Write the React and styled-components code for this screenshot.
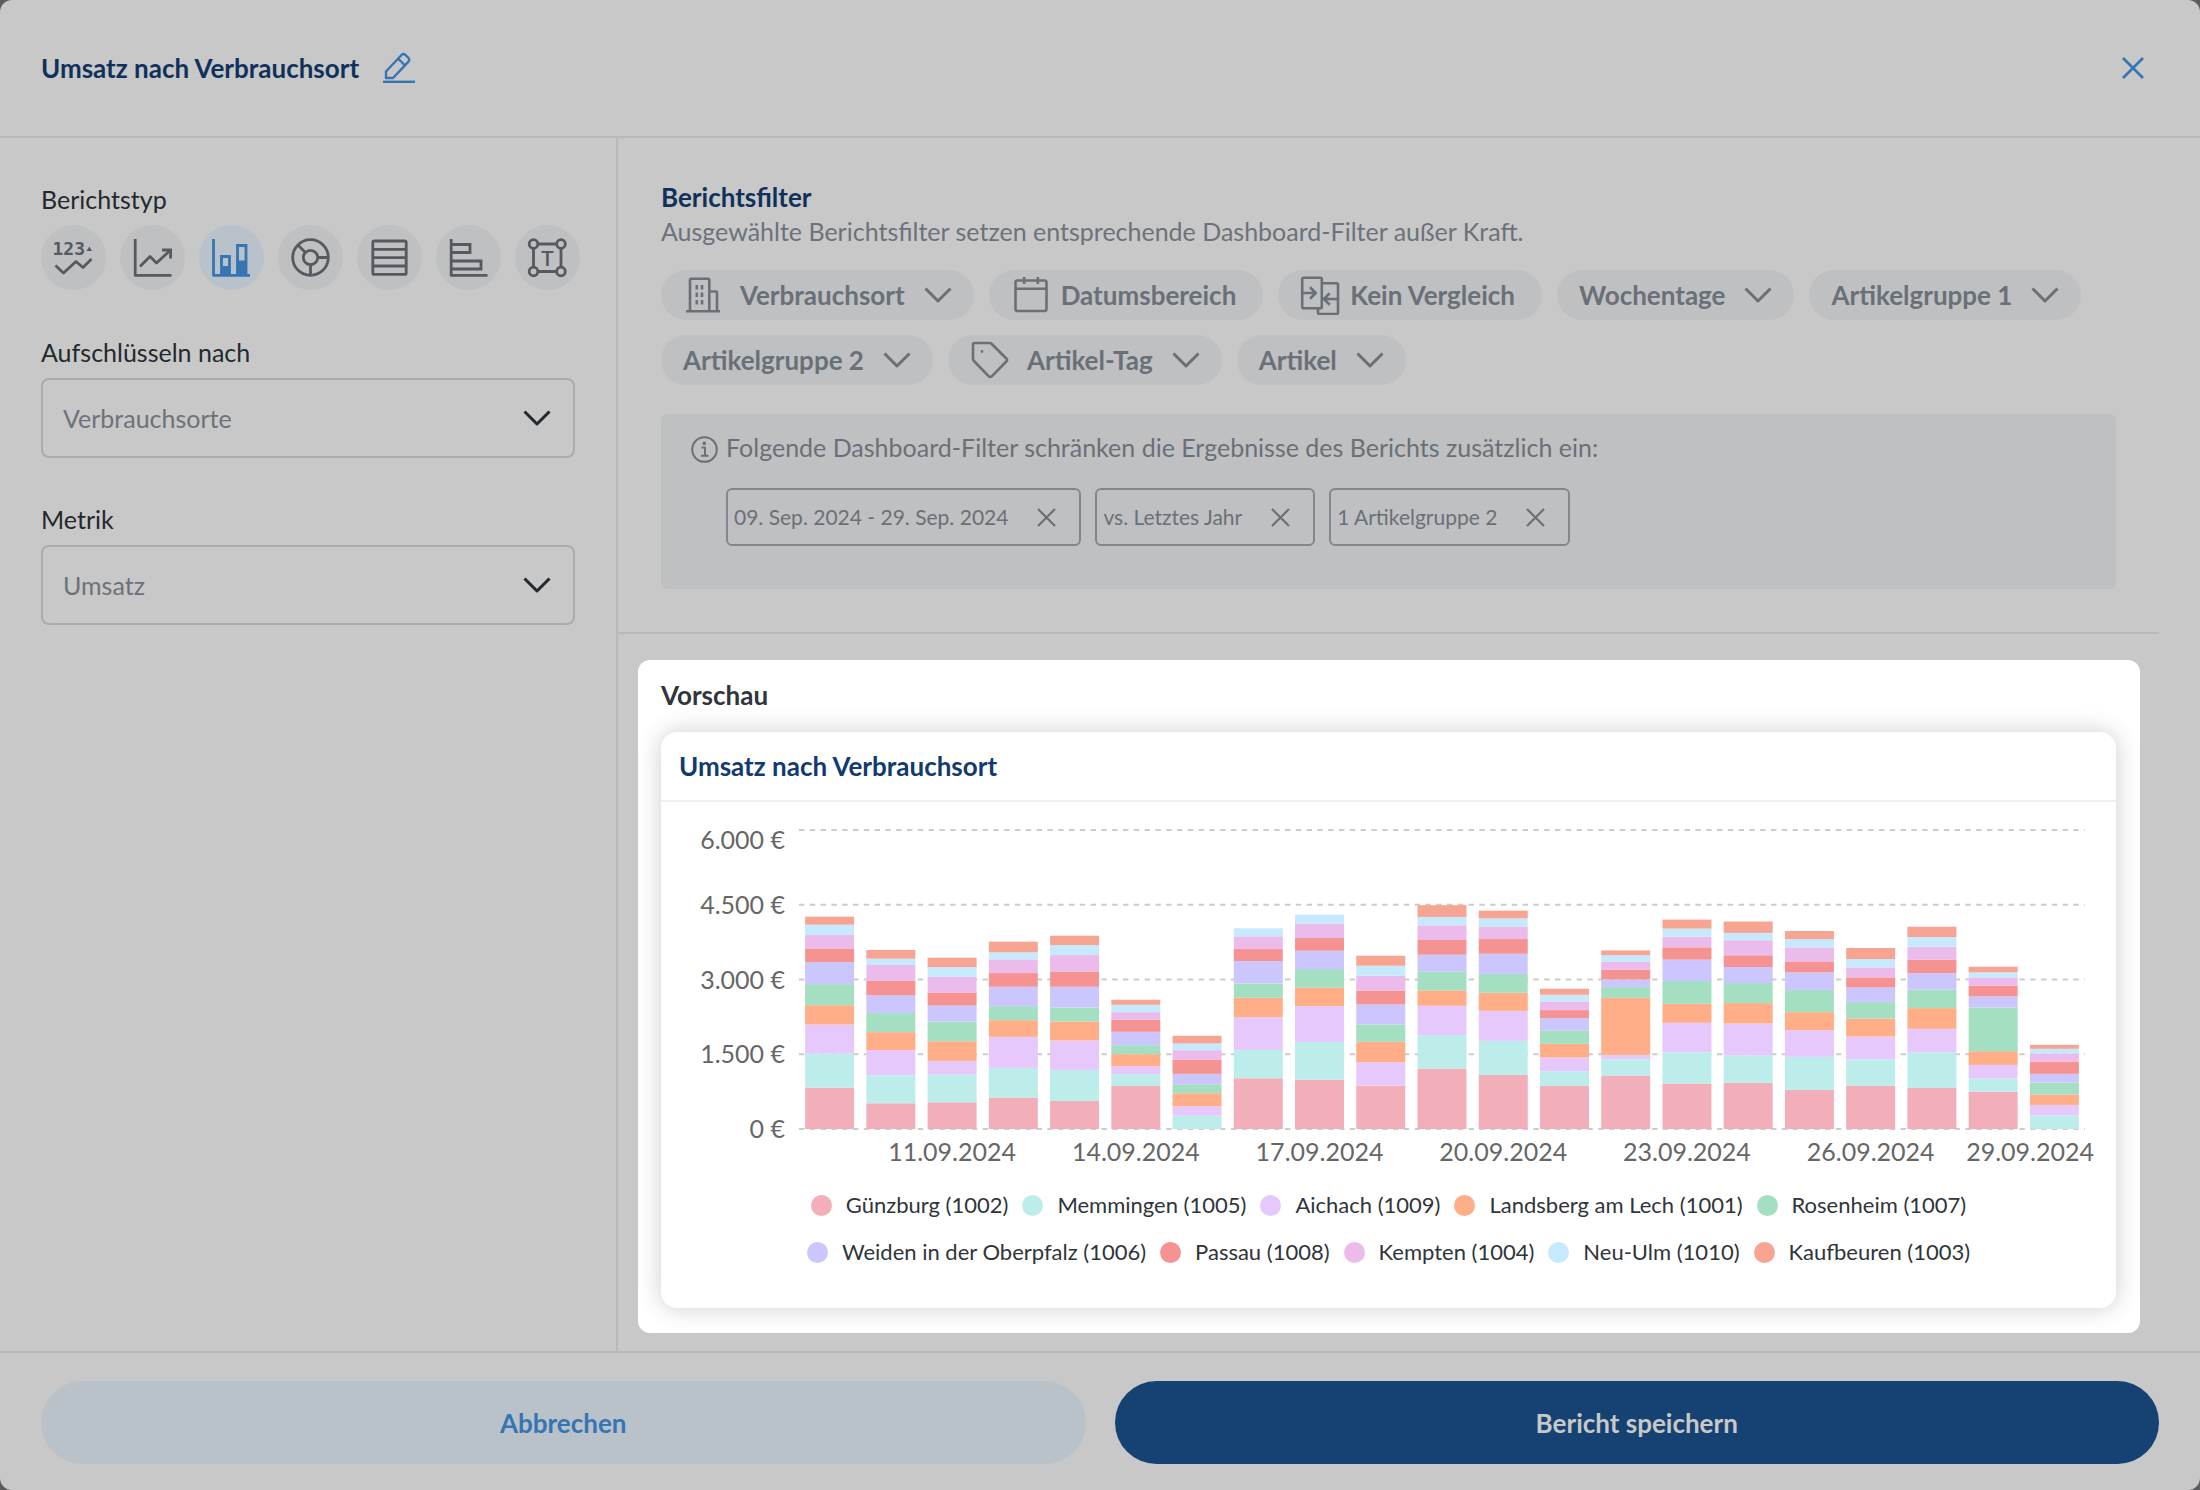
import styled, { createGlobalStyle } from "styled-components";

const GlobalStyle = createGlobalStyle`
    * {
        box-sizing: border-box;
    }
    body {
        margin: 0;
        background-color: #5a5b5c;
        font-family: Lato, "Liberation Sans", sans-serif;
        font-size: 25px;
        line-height: 34px;
    }
    button, select {
        font: inherit;
        color: inherit;
        border: none;
        background: none;
        padding: 0;
        margin: 0;
        cursor: pointer;
    }
    h1, h2, h3, p, ul {
        margin: 0;
        padding: 0;
    }
    h1, h2, h3 {
        font-size: 26px;
        font-weight: 700;
    }
    svg {
        display: block;
    }
`;

const Dialog = styled.div`
    min-height: 100vh;
    display: flex;
    flex-direction: column;
    background-color: #c8c8c8;
    border-radius: 12px;
    color: #24292e;
`;

const Header = styled.header`
    height: 138px;
    padding: 0px 56px 0px 41px;
    display: flex;
    align-items: center;
    justify-content: space-between;
    border-bottom: 2px solid #b8b9ba;
`;

const TitleGroup = styled.div`
    display: flex;
    align-items: center;
    gap: 24px;
`;

const Title = styled.h1`
    color: #0f315c;
`;

const IconButton = styled.button`
    color: #3575b3;
`;

const Body = styled.div`
    flex: 1;
    display: flex;
`;

const Sidebar = styled.aside`
    width: 618px;
    flex-shrink: 0;
    padding: 44px 41px;
    border-right: 2px solid #b8b9ba;
`;

const Label = styled.label`
    display: block;
`;

const TypeList = styled.div`
    display: flex;
    gap: 14px;
    margin: 9px 0px 45px;
`;

const TypeButton = styled.button`
    width: 65px;
    height: 65px;
    flex-shrink: 0;
    border-radius: 50%;
    background-color: ${(props) => (props.$active ? "#b9c2ca" : "#bfc0c2")};
    color: ${(props) => (props.$active ? "#3575b3" : "#555a60")};
`;

const Field = styled.div`
    margin-bottom: 44px;
`;

const SelectBox = styled.div`
    position: relative;
    margin-top: 9px;
    color: #24292e;
    svg {
        position: absolute;
        right: 24px;
        top: 32px;
        pointer-events: none;
    }
`;

const Select = styled.select`
    width: 100%;
    height: 80px;
    padding: 0px 20px;
    appearance: none;
    border: 2px solid #a9abad;
    border-radius: 8px;
    color: #6c727a;
`;

const Main = styled.main`
    flex: 1;
    padding: 0px 41px 0px 0px;
`;

const FilterSection = styled.section`
    padding: 42px 43px 43px;
    border-bottom: 2px solid #b8b9ba;
`;

const SectionTitle = styled.h2`
    color: #0f315c;
`;

const Desc = styled.p`
    color: #6c727a;
`;

const PillList = styled.div`
    display: flex;
    flex-wrap: wrap;
    gap: 15px;
    margin-top: 22px;
`;

const Pill = styled.button`
    height: 50px;
    display: flex;
    align-items: center;
    gap: ${(props) => (props.$menu ? "17px" : "10px")};
    padding: 0px ${(props) => (props.$menu ? "22px" : "27px")} 0px 22px;
    border-radius: 25px;
    background-color: #bfc0c2;
    color: #6a7077;
    font-size: 26px;
    font-weight: 700;
`;

const PillChevron = styled.span`
    margin-left: 2px;
`;

const Notice = styled.div`
    display: flex;
    gap: 8px;
    margin-top: 29px;
    padding: 16px 30px 43px;
    border-radius: 6px;
    background-color: #bfc0c2;
    color: #6a7077;
`;

const NoticeIcon = styled.span`
    padding-top: 6px;
`;

const ChipList = styled.div`
    display: flex;
    flex-wrap: wrap;
    gap: 14px;
    margin-top: 24px;
`;

const Chip = styled.span`
    height: 58px;
    display: flex;
    align-items: center;
    gap: 29px;
    padding: 0px 23px 0px 6px;
    border: 2px solid #83878c;
    border-radius: 6px;
    font-size: 21px;
`;

const Preview = styled.section`
    margin: 26px 19px 17px 20px;
    padding: 18px 24px 25px 23px;
    border-radius: 12px;
    background-color: white;
    color: #2f353a;
`;

const PreviewTitle = styled.h2``;

const Card = styled.article`
    margin-top: 20px;
    padding-bottom: 43px;
    border-radius: 16px;
    background-color: white;
    box-shadow: 0px 0px 24px rgba(0, 0, 0, 0.2);
`;

const CardTitle = styled.h3`
    padding: 17px 18px;
    color: #123a70;
    border-bottom: 2px solid #f0f0f0;
`;

const Legend = styled.ul`
    display: flex;
    flex-wrap: wrap;
    justify-content: center;
    gap: 21px 14px;
    margin-top: 20px;
    padding: 0px 40px;
    list-style: none;
    font-size: 22px;
    line-height: 26px;
`;

const LegendItem = styled.li`
    display: flex;
    align-items: center;
    gap: 14px;
`;

const Dot = styled.span`
    width: 21px;
    height: 21px;
    border-radius: 50%;
    background-color: ${(props) => props.$color};
`;

const Footer = styled.footer`
    display: flex;
    gap: 29px;
    padding: 28px 41px 26px;
    border-top: 2px solid #b8b9ba;
`;

const FooterButton = styled.button`
    flex: 1;
    height: 83px;
    border-radius: 42px;
    font-size: 26px;
    font-weight: 700;
    background-color: ${(props) => (props.$primary ? "#154272" : "#bac2c9")};
    color: ${(props) => (props.$primary ? "#c8c8c8" : "#3575b3")};
`;

const ChartSvg = styled.svg`
    width: 100%;
    height: auto;
    font-size: 25px;
    fill: #666666;
`;

const Icon = ({ size, width, height, stroke = 3, children }) => (
  <svg
    width={width || size}
    height={height || size}
    viewBox={`0 0 ${width || size} ${height || size}`}
    fill="none"
    stroke="currentColor"
    strokeWidth={stroke}
    strokeLinejoin="round"
    aria-hidden="true"
  >
    {children}
  </svg>
);

const Chevron = () => (
  <Icon width={28} height={16}>
    <path d="M1.5 1.5L14 14L26.5 1.5" />
  </Icon>
);

const Cross = ({ size, stroke }) => (
  <Icon size={size} stroke={stroke}>
    <path d={`M1 1L${size - 1} ${size - 1}M${size - 1} 1L1 ${size - 1}`} />
  </Icon>
);

const Pencil = () => (
  <Icon width={32} height={32} stroke={2.4}>
    <path d="M3 26V19.5L18.5 3Q20.5 1 22.5 3L25.5 6Q27 7.8 25.5 9.6L10 26Z" />
    <path d="M15 6.5L22 13.5" />
    <path d="M0 29.8H32" />
  </Icon>
);

const Info = () => (
  <Icon size={27} stroke={2}>
    <circle cx="13.5" cy="13.5" r="12.3" />
    <path d="M10.5 11.5H14V19.5M10 19.7H17.5" />
    <circle cx="13.3" cy="7.4" r="0.8" />
  </Icon>
);

const reportTypes = [
  {
    name: "Kennzahl",
    icon: (
      <>
        <text x="11.5" y="30" fontSize="18" fontWeight="700" fontFamily="DejaVu Sans Mono" fill="currentColor" stroke="none">123</text>
        <path d="M45.5 26L48.3 21.5L51 26Z" fill="currentColor" stroke="none" />
        <path d="M14.5 40.5L22.5 48L35 36.5L42 42.5L50.5 34" />
      </>
    ),
  },
  {
    name: "Liniendiagramm",
    icon: (
      <>
        <path d="M15.2 14V50.4H51.5" />
        <path d="M20 41.5L30 31.5L36.5 38L50 25.5" />
        <path d="M42 25H50.6V33.5" strokeLinejoin="miter" />
      </>
    ),
  },
  {
    name: "Balkendiagramm",
    active: true,
    icon: (
      <>
        <path d="M14.5 14V50.4H51" />
        <path d="M22.5 50V31.5H30.5V50M38.5 50V20.5H47V50" strokeLinejoin="miter" />
        <path d="M22.5 41H30.5V50H22.5ZM38.5 35.5H47V50H38.5Z" fill="currentColor" stroke="none" />
      </>
    ),
  },
  {
    name: "Kreisdiagramm",
    icon: (
      <>
        <circle cx="32.5" cy="32.5" r="17.8" />
        <circle cx="32.5" cy="32.5" r="7.2" />
        <path d="M39.7 32.5H50M32.5 39.7V50M27.4 27.4L20 20" />
      </>
    ),
  },
  {
    name: "Tabelle",
    icon: (
      <>
        <rect x="15.8" y="16" width="33.4" height="33.4" rx="1.5" />
        <path d="M16 24.4H49M16 32.6H49M16 41H49" />
      </>
    ),
  },
  {
    name: "Horizontales Balkendiagramm",
    icon: (
      <>
        <path d="M15.2 14V50.4H51.5" />
        <path d="M15.2 19.5H34V27.5H15.2M15.2 36H45V44H15.2" strokeLinejoin="miter" />
      </>
    ),
  },
  {
    name: "Text",
    icon: (
      <>
        <circle cx="18.5" cy="19" r="4.3" />
        <circle cx="46" cy="19" r="4.3" />
        <circle cx="18.5" cy="46.5" r="4.3" />
        <circle cx="46" cy="46.5" r="4.3" />
        <path d="M23 19H41.5M23 46.5H41.5M18.5 23.5V42M46 23.5V42" />
        <text x="32.3" y="40.5" textAnchor="middle" fontSize="21" fontWeight="500" fontFamily="Roboto" fill="currentColor" stroke="none">T</text>
      </>
    ),
  },
];

const filters = [
  {
    name: "Verbrauchsort",
    menu: true,
    icon: (
      <>
        <path d="M7 36V5Q7 3.8 8.2 3.8H25Q26.3 3.8 26.3 5V36M26.3 16.5H33Q34 16.5 34 17.5V36" />
        <path d="M3 36.3H37" />
        <path d="M13.8 10V14.5M19 10V14.5M13.8 17.5V22M19 17.5V22M13.8 25V29.5M19 25V29.5" />
      </>
    ),
  },
  {
    name: "Datumsbereich",
    icon: (
      <>
        <rect x="4.5" y="5.5" width="31" height="30.5" rx="2" />
        <path d="M4.5 13.7H35.5M13.2 2V9M26.8 2V9" />
      </>
    ),
  },
  {
    name: "Kein Vergleich",
    icon: (
      <>
        <rect x="2.2" y="2.8" width="19.6" height="30.4" rx="1.5" />
        <path d="M21.8 8.3H36.5Q38 8.3 38 9.8V37.5Q38 39 36.5 39H19.5Q18 39 18 37.5V33.2" />
        <path d="M2.2 18H15.5M10 12.3L15.8 18L10 23.7M38 24H24.2M29.7 18.3L23.9 24L29.7 29.7" />
      </>
    ),
  },
  { name: "Wochentage", menu: true },
  { name: "Artikelgruppe 1", menu: true },
  { name: "Artikelgruppe 2", menu: true },
  {
    name: "Artikel-Tag",
    menu: true,
    icon: (
      <>
        <path d="M4.3 3H19.5Q20.8 3 21.8 4L36.3 18.5Q37.8 20 36.3 21.5L21.8 36.3Q20.3 37.7 18.8 36.3L4 21Q3 20 3 18.7V4.3Q3 3 4.3 3Z" />
        <circle cx="12" cy="11.5" r="0.6" strokeWidth="1.6" />
      </>
    ),
  },
  { name: "Artikel", menu: true },
];

const chips = ["09. Sep. 2024 - 29. Sep. 2024", "vs. Letztes Jahr", "1 Artikelgruppe 2"];

const series = [
  { name: "Günzburg (1002)", color: "#f2afb9" },
  { name: "Memmingen (1005)", color: "#bcedea" },
  { name: "Aichach (1009)", color: "#e7c8fd" },
  { name: "Landsberg am Lech (1001)", color: "#ffae87" },
  { name: "Rosenheim (1007)", color: "#a3dfc0" },
  { name: "Weiden in der Oberpfalz (1006)", color: "#ccc6fe" },
  { name: "Passau (1008)", color: "#f59392" },
  { name: "Kempten (1004)", color: "#ebbbeb" },
  { name: "Neu-Ulm (1010)", color: "#c6e9fe" },
  { name: "Kaufbeuren (1003)", color: "#f7a592" },
];

// one row per day, values in the order of the series
const days = [
  [830, 683, 583, 389, 422, 442, 275, 268, 208, 161],
  [516, 563, 503, 362, 382, 355, 295, 315, 127, 174],
  [536, 556, 275, 395, 395, 322, 261, 315, 194, 188],
  [630, 596, 623, 335, 281, 389, 275, 275, 141, 214],
  [563, 623, 590, 382, 281, 415, 308, 328, 201, 188],
  [864, 235, 161, 241, 181, 268, 241, 154, 147, 101],
  [0, 268, 188, 261, 181, 208, 288, 188, 134, 154],
  [1018, 569, 657, 389, 288, 449, 241, 255, 161, 0],
  [991, 757, 717, 375, 369, 369, 255, 288, 181, 0],
  [871, 0, 469, 409, 348, 402, 281, 295, 201, 201],
  [1213, 670, 590, 308, 382, 335, 295, 295, 168, 235],
  [1085, 683, 603, 362, 375, 409, 295, 248, 168, 154],
  [864, 295, 275, 275, 268, 248, 161, 174, 134, 121],
  [1072, 328, 87, 1145, 214, 154, 194, 161, 134, 94],
  [911, 630, 590, 382, 456, 429, 248, 214, 161, 181],
  [925, 556, 637, 409, 402, 322, 235, 302, 147, 228],
  [784, 663, 536, 362, 442, 355, 221, 281, 168, 161],
  [871, 529, 456, 362, 328, 295, 201, 201, 168, 221],
  [824, 717, 469, 415, 369, 335, 268, 261, 194, 208],
  [750, 268, 268, 275, 878, 221, 214, 168, 101, 114],
  [0, 275, 208, 208, 241, 174, 248, 161, 94, 80],
];

const ticks = [
  { value: 6000, label: "6.000 €", labelY: 47 },
  { value: 4500, label: "4.500 €" },
  { value: 3000, label: "3.000 €" },
  { value: 1500, label: "1.500 €" },
  { value: 0, label: "0 €" },
];

const LEFT = 138;
const RIGHT = 1424;
const BASE = 327;
const SLOT = (RIGHT - LEFT) / days.length;
const toY = (value) => BASE - (value * 299) / 6000;

const Chart = () => (
  <ChartSvg viewBox="0 0 1455 370" role="img" aria-label="Umsatz nach Verbrauchsort">
    {ticks.map((tick) => (
      <g key={tick.value}>
        <line x1={LEFT} x2={RIGHT} y1={toY(tick.value)} y2={toY(tick.value)} stroke="#cccccc" strokeWidth="2" strokeDasharray="5.4 5.4" />
        <text x="124" y={tick.labelY || toY(tick.value) + 9} textAnchor="end">{tick.label}</text>
      </g>
    ))}
    {days.map((values, day) => {
      let sum = 0;
      return values.map((value, i) => {
        sum += value;
        return (
          <rect
            key={series[i].name}
            x={LEFT + SLOT * day + SLOT * 0.1}
            y={toY(sum)}
            width={SLOT * 0.8}
            height={BASE - toY(value)}
            fill={series[i].color}
          />
        );
      });
    })}
    {[11, 14, 17, 20, 23, 26].map((date) => (
      <text key={date} x={LEFT + SLOT * (date - 8.5)} y="359" textAnchor="middle">{date}.09.2024</text>
    ))}
    <text x="1433" y="359" textAnchor="end">29.09.2024</text>
  </ChartSvg>
);

const App = () => {
  return (
    <Dialog>
      <GlobalStyle />
      <Header>
        <TitleGroup>
          <Title>Umsatz nach Verbrauchsort</Title>
          <IconButton aria-label="Titel bearbeiten">
            <Pencil />
          </IconButton>
        </TitleGroup>
        <IconButton aria-label="Schließen">
          <Cross size={22} stroke={2.6} />
        </IconButton>
      </Header>
      <Body>
        <Sidebar>
          <Label as="p">Berichtstyp</Label>
          <TypeList>
            {reportTypes.map((type) => (
              <TypeButton key={type.name} $active={type.active} aria-label={type.name}>
                <Icon size={65} stroke={2.8}>{type.icon}</Icon>
              </TypeButton>
            ))}
          </TypeList>
          <Field>
            <Label htmlFor="group">Aufschlüsseln nach</Label>
            <SelectBox>
              <Select id="group">
                <option>Verbrauchsorte</option>
              </Select>
              <Chevron />
            </SelectBox>
          </Field>
          <Field>
            <Label htmlFor="metric">Metrik</Label>
            <SelectBox>
              <Select id="metric">
                <option>Umsatz</option>
              </Select>
              <Chevron />
            </SelectBox>
          </Field>
        </Sidebar>
        <Main>
          <FilterSection>
            <SectionTitle>Berichtsfilter</SectionTitle>
            <Desc>Ausgewählte Berichtsfilter setzen entsprechende Dashboard-Filter außer Kraft.</Desc>
            <PillList>
              {filters.map((filter) => (
                <Pill key={filter.name} $menu={filter.menu}>
                  {filter.icon && <Icon size={40} stroke={2.6}>{filter.icon}</Icon>}
                  {filter.name}
                  {filter.menu && (
                    <PillChevron>
                      <Chevron />
                    </PillChevron>
                  )}
                </Pill>
              ))}
            </PillList>
            <Notice>
              <NoticeIcon>
                <Info />
              </NoticeIcon>
              <div>
                <p>Folgende Dashboard-Filter schränken die Ergebnisse des Berichts zusätzlich ein:</p>
                <ChipList>
                  {chips.map((chip) => (
                    <Chip key={chip}>
                      {chip}
                      <button aria-label={`${chip} entfernen`}>
                        <Cross size={19} stroke={2.2} />
                      </button>
                    </Chip>
                  ))}
                </ChipList>
              </div>
            </Notice>
          </FilterSection>
          <Preview>
            <PreviewTitle>Vorschau</PreviewTitle>
            <Card>
              <CardTitle>Umsatz nach Verbrauchsort</CardTitle>
              <Chart />
              <Legend>
                {series.map((item) => (
                  <LegendItem key={item.name}>
                    <Dot $color={item.color} />
                    {item.name}
                  </LegendItem>
                ))}
              </Legend>
            </Card>
          </Preview>
        </Main>
      </Body>
      <Footer>
        <FooterButton>Abbrechen</FooterButton>
        <FooterButton $primary>Bericht speichern</FooterButton>
      </Footer>
    </Dialog>
  );
};

export default App;
